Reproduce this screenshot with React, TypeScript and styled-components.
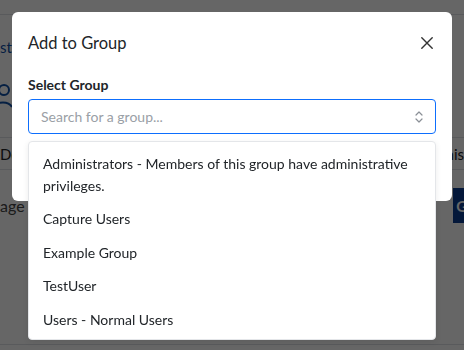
import styled, { createGlobalStyle } from "styled-components";

const Global = createGlobalStyle`
  html, body { margin: 0; padding: 0; }
  body {
    font-family: "Lato", "Open Sans", sans-serif;
    background: #fff;
    color: #212529;
    overflow: hidden;
  }
`;

const Page = styled.div`
  position: relative;
  width: 464px;
  height: 350px;
  overflow: hidden;
  background: #fff;
`;

const TopBar = styled.div`
  height: 14px;
  border-bottom: 1px solid #dee2e6;
`;

const Crumb = styled.div`
  margin-top: 21px;
  color: #0d4ea6;
  font-size: 15px;
  line-height: 22px;
`;

const UserIcon = styled.div`
  margin-top: 25px;
  height: 30px;
  color: #0d4ea6;
`;

const Tabs = styled.div`
  margin-top: 24px;
  height: 31px;
  border-top: 1px solid #dee2e6;
  border-bottom: 1px solid #dee2e6;
  display: flex;
  justify-content: space-between;
  align-items: center;
  font-size: 15px;
`;

const Row = styled.div`
  display: flex;
  justify-content: space-between;
  align-items: center;
  margin-top: 18px;
  font-size: 16px;
  color: #444;
`;

const BlueButton = styled.div`
  background: #0a3d91;
  color: #fff;
  height: 35px;
  padding: 0 6px 0 3px;
  display: flex;
  align-items: center;
  font-weight: 700;
  font-size: 15px;
  margin-right: -40px;
`;

const BottomLine = styled.div`
  position: absolute;
  left: 0;
  right: 0;
  top: 344px;
  border-top: 1px solid #dee2e6;
`;

const Backdrop = styled.div`
  position: fixed;
  inset: 0;
  background: rgba(0, 0, 0, 0.6);
`;

const Modal = styled.div`
  position: absolute;
  left: 12px;
  top: 12px;
  width: 440px;
  height: 189px;
  background: #fff;
  border-radius: 6px;
  box-sizing: border-box;
  padding: 0 16px;
`;

const Header = styled.div`
  height: 62px;
  display: flex;
  align-items: center;
  justify-content: space-between;
`;

const Title = styled.h5`
  margin: 0;
  font-size: 16.5px;
  font-weight: 400;
  color: #212529;
`;

const Close = styled.button`
  border: 0;
  background: none;
  padding: 0;
  width: 12px;
  height: 12px;
  display: flex;
  align-items: center;
  justify-content: center;
  color: #333;
  margin-right: 3px;
`;

const Label = styled.label`
  display: block;
  margin-top: 1px;
  font-size: 14px;
  font-weight: 700;
  color: #212529;
  line-height: 20px;
`;

const InputWrap = styled.div`
  margin-top: 4px;
  height: 35px;
  box-sizing: border-box;
  border: 1px solid #0d6efd;
  border-radius: 4px;
  display: flex;
  align-items: center;
  justify-content: space-between;
  padding: 0 11px 0 12px;
`;

const Placeholder = styled.span`
  font-size: 14px;
  color: #9aa0a6;
`;

const Menu = styled.ul`
  position: absolute;
  left: 28px;
  top: 141px;
  width: 408px;
  height: 199px;
  box-sizing: border-box;
  margin: 0;
  padding: 5px 0 0;
  list-style: none;
  background: #fff;
  border: 1px solid #e4e6e9;
  border-radius: 4px;
  box-shadow: 0 2px 6px rgba(0, 0, 0, 0.08);
`;

const Item = styled.li`
  padding: 6px 15px 6px 14px;
  font-size: 14px;
  line-height: 21.5px;
  color: #212529;
`;

const groups = [
  "Administrators - Members of this group have administrative privileges.",
  "Capture Users",
  "Example Group",
  "TestUser",
  "Users - Normal Users",
];

export default function App() {
  return (
    <Page>
      <Global />
      <TopBar />
      <Crumb>strators</Crumb>
      <UserIcon>
        <svg width="14" height="30" viewBox="0 0 14 30" fill="none" stroke="currentColor" strokeWidth="2">
          <circle cx="4" cy="7" r="5" />
          <path d="M-6 24 a10 8 0 0 1 18 0" />
        </svg>
      </UserIcon>
      <Tabs>
        <span>Details</span>
        <span>Permis</span>
      </Tabs>
      <Row>
        <span>age with</span>
        <BlueButton>Group</BlueButton>
      </Row>
      <BottomLine />
      <Backdrop />
      <Modal>
        <Header>
          <Title>Add to Group</Title>
          <Close aria-label="Close">
            <svg width="12" height="12" viewBox="0 0 12 12" stroke="currentColor" strokeWidth="1.4" strokeLinecap="round">
              <path d="M0.8 0.8 L11.2 11.2 M11.2 0.8 L0.8 11.2" />
            </svg>
          </Close>
        </Header>
        <Label>Select Group</Label>
        <InputWrap>
          <Placeholder>Search for a group...</Placeholder>
          <svg width="10" height="14" viewBox="0 0 10 14" fill="none" stroke="#8a8f96" strokeWidth="1.2" strokeLinecap="round" strokeLinejoin="round">
            <path d="M2 5 L5 2 L8 5 M2 9 L5 12 L8 9" />
          </svg>
        </InputWrap>
      </Modal>
      <Menu>
        {groups.map((g) => (
          <Item key={g}>{g}</Item>
        ))}
      </Menu>
    </Page>
  );
}
